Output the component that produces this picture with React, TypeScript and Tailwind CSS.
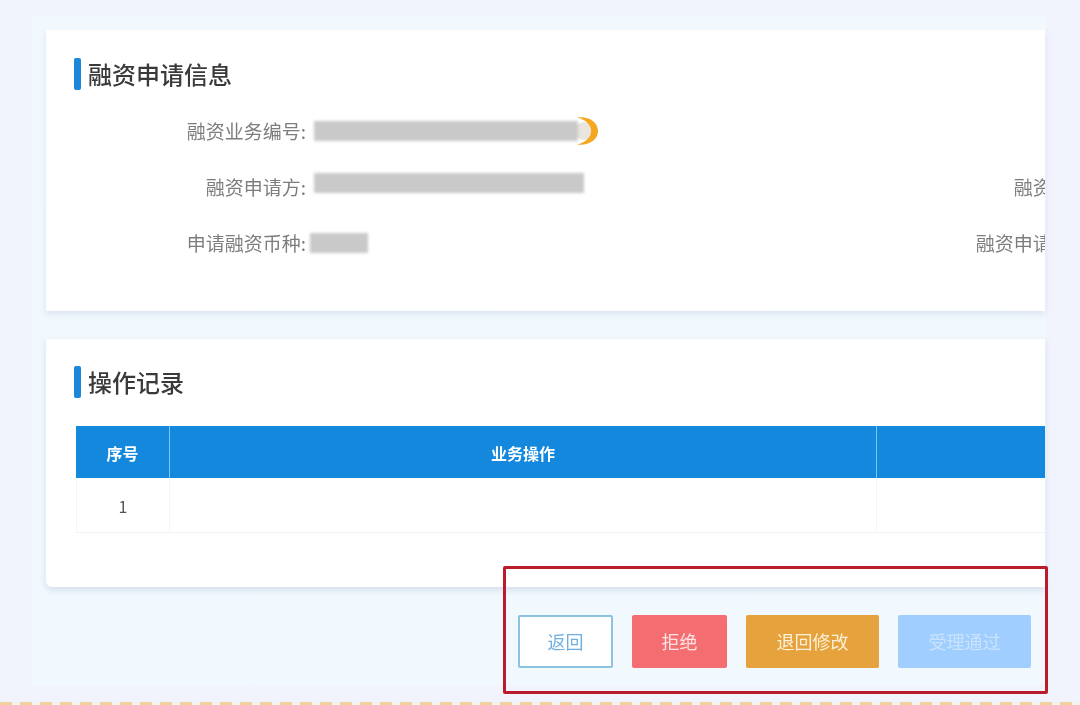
import React from 'react';

const font = "font-['Noto_Sans_CJK_SC','Noto_Sans',sans-serif]";

const SectionTitle = ({ children }: { children: React.ReactNode }) => (
  <div className="flex items-center gap-[7px] h-8">
    <span className="w-[7px] h-8 rounded-[2px] bg-[#1a87d9]" />
    <h2 className="text-[24px] leading-8 font-medium text-[#3a3a3a]">{children}</h2>
  </div>
);

const Field = ({ label, children }: { label: string; children?: React.ReactNode }) => (
  <div className="flex items-center h-[56px]">
    <span className="w-[260px] shrink-0 pt-[3px] text-right text-[19px] text-[#7d7d7d] whitespace-nowrap">{label}</span>
    {children}
  </div>
);

// orange crescent peeking out from behind the masked value
const Moon = () => (
  <svg className="absolute left-[258px] -top-[5px] blur-[0.5px]" width="28" height="30" viewBox="0 0 28 30">
    <circle cx="12" cy="15" r="9" fill="#e9e6df" />
    <path d="M5 1.5C16 0 26 5.5 26 15S16 30 5 28.5C9 27.5 12.5 26 15 23.5C18 21 19 18 19 15S18 9 15 6.5C12.5 4 9 2.5 5 1.5Z" fill="#f5a81f" />
  </svg>
);

export default function App() {
  return (
    <div className={`relative w-[1080px] h-[705px] overflow-hidden bg-[#f1f4fd] pt-4 pl-8 ${font}`}>
      <div className="w-[1014px] h-[669px] bg-gradient-to-b from-[#f2f9fe] to-[#f1f8fe] pt-[14px] pl-[14px] blur-[0.7px]">
        <div className="w-[999px] h-[281px] overflow-hidden bg-white shadow-[0_3px_6px_rgba(150,165,190,0.25)] pt-7 pl-7">
          <SectionTitle>融资申请信息</SectionTitle>
          <div className="-ml-7 mt-[12px] grid grid-cols-[789px_789px]">
            <Field label="融资业务编号:">
              <div className="relative ml-2 mt-[2px] w-[264px] h-5">
                <Moon />
                <div className="relative w-full h-full bg-[#c9c9c9] blur-[1.5px]" />
              </div>
            </Field>
            <Field label="" />
            <Field label="融资申请方:">
              <div className="ml-2 mb-[6px] w-[270px] h-5 bg-[#c9c9c9] blur-[1.5px]" />
            </Field>
            <Field label="融资期限:" />
            <Field label="申请融资币种:">
              <div className="ml-1 mt-[2px] w-[58px] h-5 bg-[#c9c9c9] blur-[1.5px]" />
            </Field>
            <Field label="融资申请金额:" />
          </div>
        </div>

        <div className="mt-[28px] w-[999px] h-[248px] overflow-hidden rounded-bl-md bg-white shadow-[0_3px_6px_rgba(150,165,190,0.3)] pt-[27px] pl-7">
          <SectionTitle>操作记录</SectionTitle>
          <div className="mt-[28px] ml-[2px]">
            <div className="flex h-[52px] bg-[#1488dc] text-white text-[16px] font-bold">
              <div className="w-[94px] pt-px flex items-center justify-center border-r border-[#7cc5f5]">序号</div>
              <div className="w-[707px] pt-px flex items-center justify-center border-r border-[#7cc5f5]">业务操作</div>
              <div className="flex-1" />
            </div>
            <div className="flex h-[55px] border-b border-[#f0f1f3] text-[16px] text-[#555]">
              <div className="w-[94px] pt-px flex items-center justify-center border-r border-l border-[#f5f5f6]">1</div>
              <div className="w-[707px] border-r border-[#f5f5f6]" />
              <div className="flex-1" />
            </div>
          </div>
        </div>

        <div className="mt-[28px] w-[999px] flex justify-end gap-[19px] pr-[14px] text-[18px]">
          <button className="w-[95px] h-[53px] rounded-[2px] border-2 border-[#8cc3e0] bg-white text-[#6fb0df]">返回</button>
          <button className="w-[95px] h-[53px] rounded-[2px] bg-[#f46d70] text-[#fde3e3]">拒绝</button>
          <button className="w-[133px] h-[53px] rounded-[2px] bg-[#e6a23c] text-[#fdf0d8]">退回修改</button>
          <button className="w-[133px] h-[53px] rounded-[2px] bg-[#a0cfff] text-[#c9e3fd]">受理通过</button>
        </div>
      </div>

      <div className="absolute left-[503px] top-[566px] w-[545px] h-[128px] rounded-[2px] border-[3px] border-[#bb1c2c] blur-[0.4px]" />
      <div className="absolute left-0 bottom-0 w-full h-[3px] bg-[repeating-linear-gradient(90deg,#f1d29e_0,#f1d29e_12px,#f5f2ee_12px,#f5f2ee_20px)]" />
    </div>
  );
}
